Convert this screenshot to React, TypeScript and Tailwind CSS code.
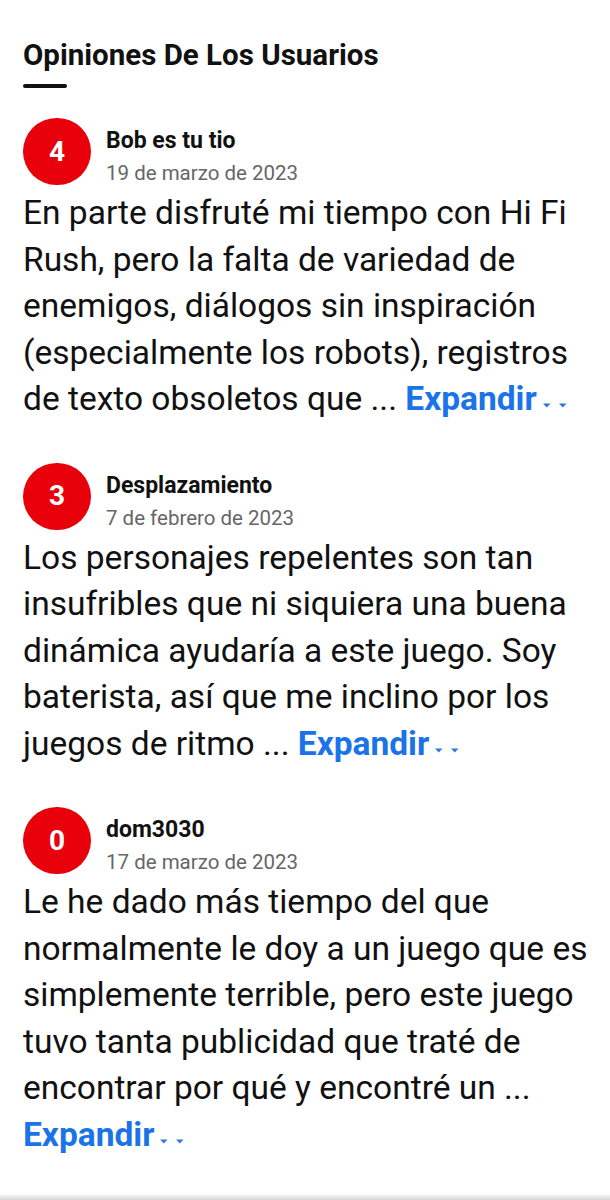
import React from "react";

type Review = { score: string; name: string; date: string; lines: string[]; lastPrefix: string; expandOwnLine?: boolean };

const reviews: Review[] = [
  {
    score: "4",
    name: "Bob es tu tio",
    date: "19 de marzo de 2023",
    lines: [
      "En parte disfruté mi tiempo con Hi Fi",
      "Rush, pero la falta de variedad de",
      "enemigos, diálogos sin inspiración",
      "(especialmente los robots), registros",
    ],
    lastPrefix: "de texto obsoletos que ... ",
  },
  {
    score: "3",
    name: "Desplazamiento",
    date: "7 de febrero de 2023",
    lines: [
      "Los personajes repelentes son tan",
      "insufribles que ni siquiera una buena",
      "dinámica ayudaría a este juego. Soy",
      "baterista, así que me inclino por los",
    ],
    lastPrefix: "juegos de ritmo ... ",
  },
  {
    score: "0",
    name: "dom3030",
    date: "17 de marzo de 2023",
    lines: [
      "Le he dado más tiempo del que",
      "normalmente le doy a un juego que es",
      "simplemente terrible, pero este juego",
      "tuvo tanta publicidad que traté de",
      "encontrar por qué y encontré un ...",
    ],
    lastPrefix: "",
    expandOwnLine: true,
  },
];

function Arrows() {
  return (
    <svg width="26" height="10" viewBox="0 0 26 10" className="inline-block ml-[4px] align-baseline">
      <polygon points="2,3.5 9.5,3.5 5.75,7.5" fill="#2a7ad6" />
      <polygon points="18,3.5 25.5,3.5 21.75,7.5" fill="#2a7ad6" />
    </svg>
  );
}

function Expand() {
  return (
    <span className="text-[#1a73e8] font-bold whitespace-nowrap">
      Expandir
      <Arrows />
    </span>
  );
}

function Card({ r }: { r: Review }) {
  return (
    <div className="flex flex-col">
      <div className="flex items-start gap-[15px] h-[67px]">
        <div className="w-[68px] h-[67px] rounded-full bg-[#e8000b] flex items-center justify-center text-white font-bold text-[28px] shrink-0">
          {r.score}
        </div>
        <div className="flex flex-col pt-[8px]">
          <div className="text-[23px] font-bold text-[#111] leading-[30px]">{r.name}</div>
          <div className="text-[20.5px] text-[#666] leading-[28px] mt-[3px]">{r.date}</div>
        </div>
      </div>
      <div className="text-[33.5px] leading-[46.5px] text-[#111] mt-[5px]">
        {r.lines.map((l, i) => (
          <div key={i} className="whitespace-nowrap">{l}</div>
        ))}
        {r.expandOwnLine ? (
          <div>
            <Expand />
          </div>
        ) : (
          <div className="whitespace-nowrap">
            {r.lastPrefix}
            <Expand />
          </div>
        )}
      </div>
    </div>
  );
}

export default function App() {
  return (
    <div className="w-[610px] h-[1200px] overflow-hidden bg-white relative" style={{ fontFamily: "Roboto, 'Noto Sans', sans-serif" }}>
      <div className="pl-[23px] pr-[10px] pt-[38px] flex flex-col">
        <div className="text-[29.5px] font-bold text-[#111] leading-[34px]">Opiniones De Los Usuarios</div>
        <div className="w-[44px] h-[4px] rounded-full bg-[#111] mt-[12px]" />
        <div className="flex flex-col gap-[40px] mt-[30px]">
          {reviews.map((r, i) => (
            <Card key={i} r={r} />
          ))}
          <div className="w-[68px] h-[67px] rounded-full bg-[#e8000b]" />
        </div>
      </div>
      <div className="absolute left-0 right-0 bottom-0 h-[5px] bg-gradient-to-b from-[#f2f2f2] to-[#d6d6d6]" />
    </div>
  );
}
